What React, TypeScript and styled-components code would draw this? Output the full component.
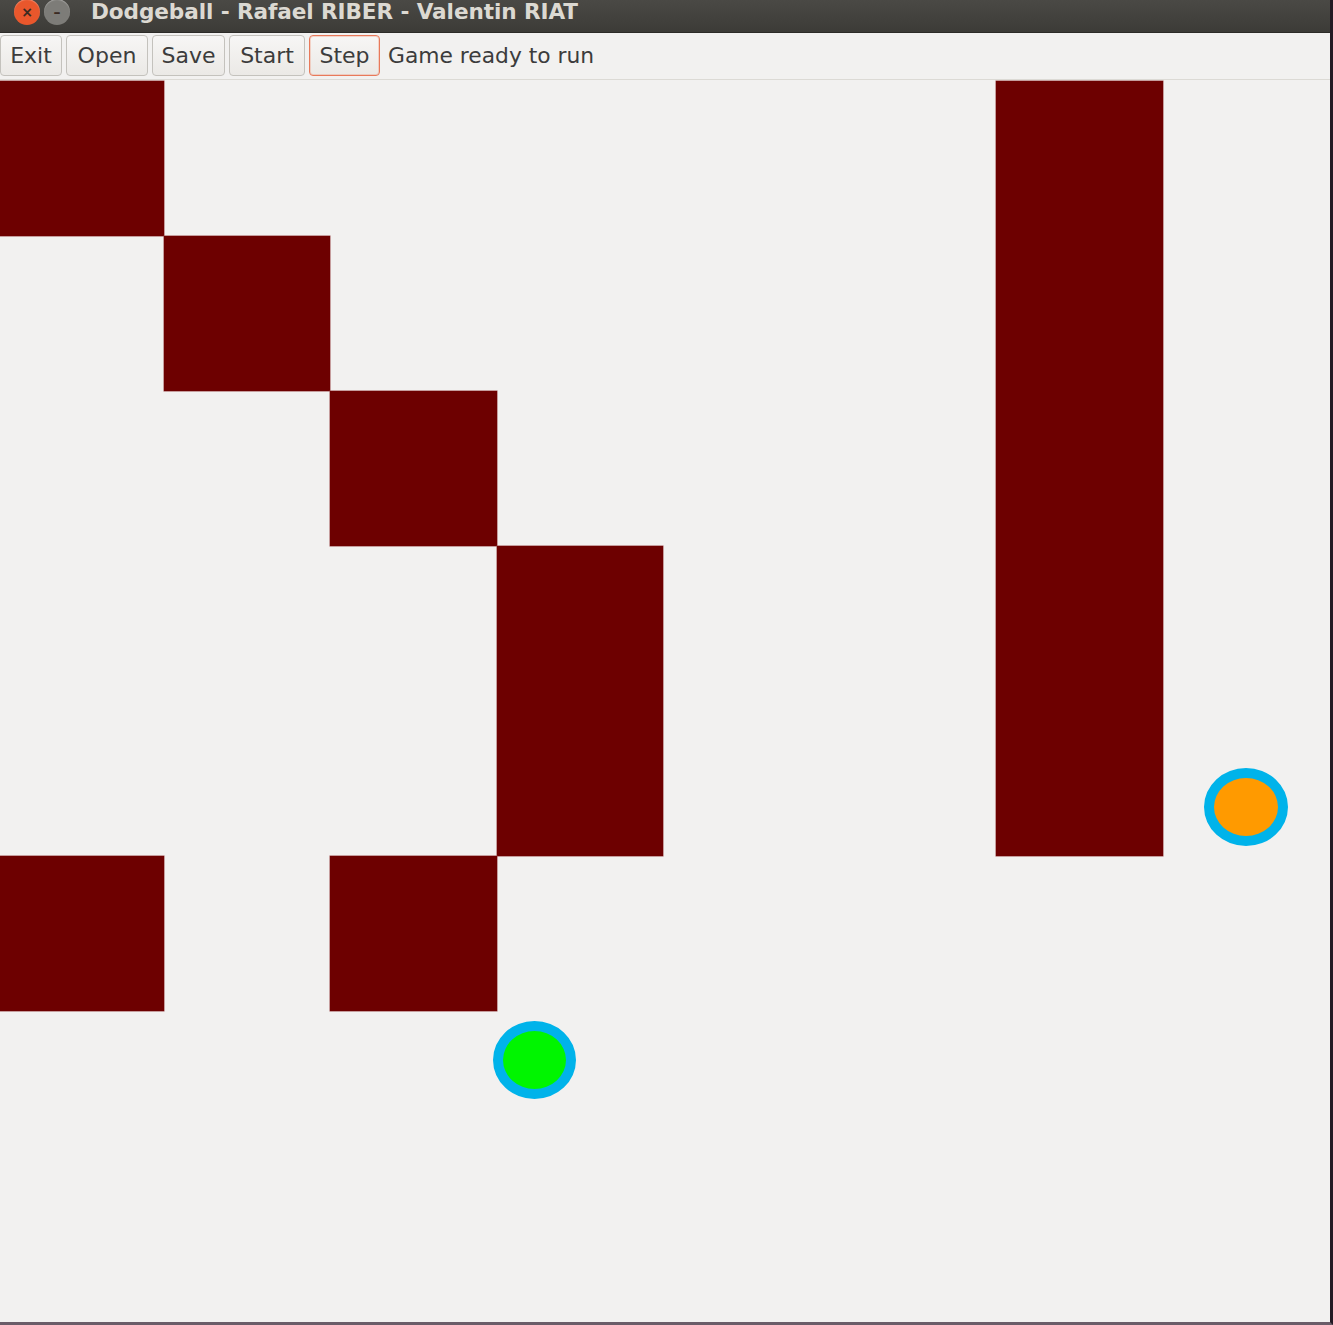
import React from 'react';
import styled, { createGlobalStyle } from 'styled-components';

const GlobalStyle = createGlobalStyle`
  html, body {
    margin: 0;
    padding: 0;
    background: #f2f1f0;
  }
`;

const Window = styled.div`
  width: 1333px;
  height: 1325px;
  display: flex;
  flex-direction: column;
  background: #f2f1f0;
  box-sizing: border-box;
  border-right: 3px solid #231a24;
  border-bottom: 3px solid #6a5c68;
  overflow: hidden;
`;

const TitleBar = styled.div`
  height: 33px;
  flex: none;
  display: flex;
  align-items: center;
  background: linear-gradient(#4a4945, #3c3b37);
  border-bottom: 1px solid #2c2b28;
  box-sizing: border-box;
  padding-left: 14px;
  margin-right: -3px;
`;

const WinButton = styled.div<{ $color: string }>`
  width: 26px;
  height: 26px;
  border-radius: 50%;
  margin-top: -9px;
  margin-right: 4px;
  background: ${(p) => p.$color};
  color: #3a2a22;
  display: flex;
  align-items: center;
  justify-content: center;
  font-family: 'DejaVu Sans', sans-serif;
  font-size: 14px;
  font-weight: bold;
  box-shadow: inset 0 1px 1px rgba(255, 255, 255, 0.3);
`;

const Title = styled.div`
  margin-left: 17px;
  margin-top: -9px;
  font-family: 'DejaVu Sans', 'Noto Sans', sans-serif;
  font-weight: 700;
  font-size: 21.6px;
  color: #dcd9d2;
  letter-spacing: -0.1px;
  white-space: nowrap;
`;

const Toolbar = styled.div`
  height: 47px;
  flex: none;
  display: flex;
  align-items: center;
  gap: 4px;
  border-bottom: 1px solid #dcdad5;
  box-sizing: border-box;
  padding-bottom: 2px;
`;

const Button = styled.button<{ $w: number; $focused?: boolean }>`
  width: ${(p) => p.$w}px;
  height: 41px;
  padding: 0;
  border-radius: 4px;
  border: 1px solid ${(p) => (p.$focused ? '#e8795a' : '#c4c2bd')};
  box-shadow: ${(p) => (p.$focused ? 'inset 0 0 0 1px rgba(240, 150, 120, 0.35)' : 'none')};
  background: linear-gradient(#f7f6f5, #ebe9e6);
  font-family: 'DejaVu Sans', 'Noto Sans', sans-serif;
  font-size: 22px;
  color: #3c3c3c;
  margin: 0;
  cursor: pointer;
`;

const Status = styled.span`
  margin-left: 4px;
  font-family: 'DejaVu Sans', 'Noto Sans', sans-serif;
  font-size: 21.8px;
  color: #3c3c3c;
`;

const Board = styled.div`
  position: relative;
  flex: 1;
  margin-top: 1px;
  margin-left: -3px;
  width: 1332px;
  display: grid;
  grid-template-columns: repeat(8, 1fr);
  grid-template-rows: repeat(8, 155px);
`;

const Wall = styled.div<{ $col: number; $row: number; $h?: number }>`
  grid-column: ${(p) => p.$col + 1};
  grid-row: ${(p) => p.$row + 1} / span ${(p) => p.$h ?? 1};
  background: #6d0000;
  box-shadow: 0 0 0 0.5px #9a4a4a;
`;

const Ball = styled.div<{ $fill: string }>`
  position: absolute;
  box-sizing: border-box;
  border-radius: 50%;
  border: 10px solid #00b3ea;
  background: ${(p) => p.$fill};
`;

const buttons = [
  { label: 'Exit', w: 62 },
  { label: 'Open', w: 82 },
  { label: 'Save', w: 73 },
  { label: 'Start', w: 76 },
  { label: 'Step', w: 71, focused: true },
];

const walls = [
  { col: 0, row: 0 },
  { col: 1, row: 1 },
  { col: 2, row: 2 },
  { col: 3, row: 3, h: 2 },
  { col: 6, row: 0, h: 5 },
  { col: 0, row: 5 },
  { col: 2, row: 5 },
];

const balls = [
  { left: 1207, top: 687, w: 84, h: 78, fill: '#ff9a00' },
  { left: 496, top: 940, w: 83, h: 78, fill: '#00f500' },
];

const App: React.FC = () => {
  return (
    <>
      <GlobalStyle />
      <Window>
        <TitleBar>
          <WinButton $color="#e9572c">×</WinButton>
          <WinButton $color="#7d7c78">–</WinButton>
          <Title>Dodgeball - Rafael RIBER - Valentin RIAT</Title>
        </TitleBar>
        <Toolbar>
          {buttons.map((b) => (
            <Button key={b.label} $w={b.w} $focused={b.focused}>
              {b.label}
            </Button>
          ))}
          <Status>Game ready to run</Status>
        </Toolbar>
        <Board>
          {walls.map((w, i) => (
            <Wall key={i} $col={w.col} $row={w.row} $h={w.h} />
          ))}
          {balls.map((b, i) => (
            <Ball
              key={i}
              $fill={b.fill}
              style={{ left: b.left, top: b.top, width: b.w, height: b.h }}
            />
          ))}
        </Board>
      </Window>
    </>
  );
};

export default App;
